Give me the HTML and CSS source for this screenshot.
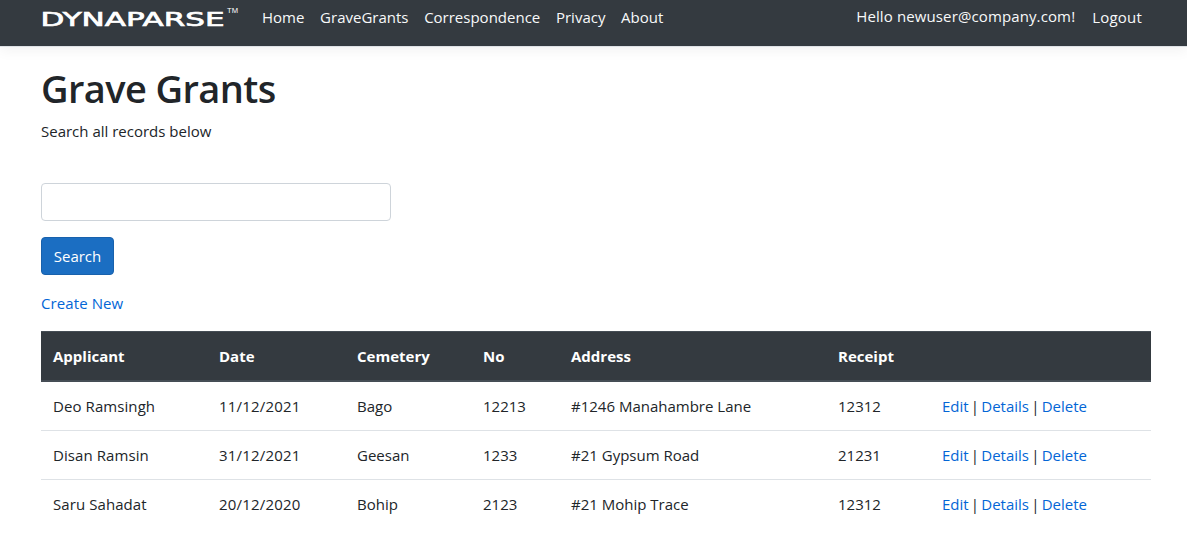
FILE: index.html
```html
<!DOCTYPE html>
<html lang="en">
<head>
<meta charset="utf-8">
<title>Grave Grants</title>
<link rel="stylesheet" href="styles.css">
</head>
<body>
<header class="navbar">
  <a class="brand" href="#">
    <svg class="wordmark" width="200" height="30" viewBox="0 0 200 30" aria-label="DYNAPARSE">
      <text class="wordmark-name" x="-1.5" y="25.5" textLength="184" lengthAdjust="spacingAndGlyphs">DYNAPARSE</text>
      <text class="wordmark-tm" x="185" y="13" textLength="11" lengthAdjust="spacingAndGlyphs">TM</text>
    </svg>
  </a>
  <nav class="menu">
    <a href="#">Home</a>
    <a class="grants" href="#">GraveGrants</a>
    <a class="corr" href="#">Correspondence</a>
    <a href="#">Privacy</a>
    <a href="#">About</a>
  </nav>
  <div class="account">
    <span class="hello">Hello newuser@company.com!</span>
    <a href="#">Logout</a>
  </div>
</header>
<main class="content">
  <h1 class="title">Grave Grants</h1>
  <p class="lead">Search all records below</p>
  <form class="search">
    <input class="field" type="text" aria-label="Search records">
    <button class="button" type="button">Search</button>
  </form>
  <p class="create"><a href="#">Create New</a></p>
  <table class="records">
    <colgroup><col class="c-applicant"><col class="c-date"><col class="c-cemetery"><col class="c-no"><col class="c-address"><col class="c-receipt"><col class="c-actions"></colgroup>
    <thead>
      <tr><th>Applicant</th><th>Date</th><th>Cemetery</th><th>No</th><th>Address</th><th>Receipt</th><th></th></tr>
    </thead>
    <tbody>
      <tr><td class="name">Deo Ramsingh</td><td class="date">11/12/2021</td><td>Bago</td><td>12213</td><td>#1246 Manahambre Lane</td><td>12312</td><td class="actions"><a href="#">Edit</a> | <a href="#">Details</a> | <a href="#">Delete</a></td></tr>
      <tr><td class="name">Disan Ramsin</td><td class="date">31/12/2021</td><td>Geesan</td><td>1233</td><td>#21 Gypsum Road</td><td>21231</td><td class="actions"><a href="#">Edit</a> | <a href="#">Details</a> | <a href="#">Delete</a></td></tr>
      <tr><td class="name">Saru Sahadat</td><td class="date">20/12/2020</td><td>Bohip</td><td>2123</td><td>#21 Mohip Trace</td><td>12312</td><td class="actions"><a href="#">Edit</a> | <a href="#">Details</a> | <a href="#">Delete</a></td></tr>
    </tbody>
  </table>
</main>
</body>
</html>
```
FILE: styles.css
```css
* { box-sizing: border-box; }
body {
  margin: 0;
  background: #fff;
  color: #212529;
  font: 15px/24px "Open Sans", "Noto Sans", sans-serif;
}
a { color: #0366d6; text-decoration: none; }
.navbar {
  display: flex;
  align-items: flex-start;
  height: 47px;
  padding: 0 45px 0 42px;
  background: #343a40;
  border-bottom: 1px solid #dee2e6;
  box-shadow: 0 4px 12px rgba(0, 0, 0, .05);
  color: #f8f9fa;
}
.navbar a { color: #f8f9fa; }
.brand { display: block; width: 220px; height: 30px; }
.wordmark { display: block; fill: #fff; overflow: visible; }
.wordmark-name { font: 20px "DejaVu Sans", sans-serif; stroke: #fff; stroke-width: .7px; }
.wordmark-tm { font: 7px "Liberation Sans", sans-serif; }
.menu { display: flex; gap: 15.7px; padding-top: 5px; }
.account { display: flex; gap: 17px; margin-left: auto; padding-top: 5px; }
.account a { letter-spacing: .2px; }
.hello { margin-top: -1px; letter-spacing: .12px; }
.content { padding: 17px 36px 0 41px; }
.title { margin: 0 0 7px; font-size: 38px; font-weight: 600; line-height: 48px; letter-spacing: -.6px; }
.lead { margin: 0 0 40px; }
.search { display: flex; flex-direction: column; align-items: flex-start; gap: 16px; }
.field { width: 350px; height: 38px; border: 1px solid #ced4da; border-radius: 4px; background: #fff; }
.button {
  width: 73px;
  height: 38px;
  padding: 0;
  border: 1px solid #1861ac;
  border-radius: 4px;
  background: #1b6ec2;
  color: #fff;
  font: inherit;
}
.create { margin: 16px 0; letter-spacing: .1px; }
.records { width: 1110px; table-layout: fixed; border-collapse: separate; border-spacing: 0; }
.c-applicant { width: 166px; }
.c-date { width: 138px; }
.c-cemetery { width: 126px; }
.c-no { width: 88px; }
.c-address { width: 267px; }
.c-receipt { width: 104px; }
.c-actions { width: 221px; }
.records th {
  padding: 12px;
  background: #343a40;
  border-top: 1px solid #454d55;
  border-bottom: 2px solid #454d55;
  color: #fff;
  font-weight: 700;
  text-align: left;
}
.records td { height: 49px; padding: 12px; border-top: 1px solid #dee2e6; white-space: nowrap; }
.records tbody tr:first-child td { height: 48px; border-top: 0; }
.records .name { letter-spacing: .08px; }
.records .date { letter-spacing: .2px; }
.records .actions { word-spacing: -1.7px; }
```
